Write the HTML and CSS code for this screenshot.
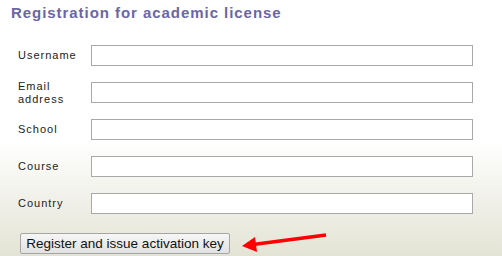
FILE: index.html
```html
<!DOCTYPE html>
<html>
<head>
<meta charset="utf-8">
<link rel="stylesheet" href="styles.css">
</head>
<body>
<div class="page">
  <h1 class="title">Registration for academic license</h1>
  <form class="form">
    <div class="fields">
      <label class="label" for="u">Username</label><input class="input" id="u" type="text">
      <label class="label" for="e">Email address</label><input class="input" id="e" type="text">
      <label class="label" for="s">School</label><input class="input" id="s" type="text">
      <label class="label" for="c">Course</label><input class="input" id="c" type="text">
      <label class="label" for="k">Country</label><input class="input" id="k" type="text">
    </div>
    <div class="actions">
      <button class="btn" type="button">Register and issue activation key</button>
      <svg class="arrow" width="88" height="26" viewBox="0 0 88 26">
        <line x1="13" y1="14.5" x2="86" y2="5" stroke="#f00" stroke-width="3.5" stroke-linecap="butt"/>
        <polygon points="2,16 15,7 17,22" fill="#f00"/>
      </svg>
    </div>
  </form>
</div>
</body>
</html>
```
FILE: styles.css
```css
html {
  background: linear-gradient(to bottom, #ffffff 0px, #ffffff 140px, #e3e3d5 256px);
  min-height: 256px;
}
body {
  margin: 0;
  font-family: "Liberation Sans", Arial, sans-serif;
}
.page {
  padding: 4px 0 0 0;
}
.title {
  margin: 0 0 0 11px;
  font-size: 15px;
  font-weight: bold;
  letter-spacing: 0.95px;
  color: #6a66a8;
  line-height: 18px;
}
.form {
  margin: 15px 0 0 18px;
}
.fields {
  display: grid;
  grid-template-columns: 73px 382px;
  grid-auto-rows: 37px;
  align-items: center;
}
.label {
  font-size: 11px;
  letter-spacing: 1px;
  line-height: 13px;
  color: #222;
  padding-right: 6px;
}
.input {
  box-sizing: border-box;
  width: 382px;
  height: 21px;
  margin: 0;
  border: 1px solid #a9a9a9;
  background: #fff;
  padding: 1px 3px;
}
.actions {
  display: flex;
  align-items: center;
  margin-top: 8px;
}
.btn {
  margin: 0 0 0 2px;
  height: 21px;
  width: 210px;
  padding: 0;
  font-family: "Liberation Sans", Arial, sans-serif;
  font-size: 13.5px;
  color: #111;
  border: 1px solid #a6a6a6;
  border-radius: 2px;
  background: linear-gradient(to bottom, #f6f6f6, #e2e2e2);
}
.arrow {
  margin-left: 10px;
  display: block;
}
```
